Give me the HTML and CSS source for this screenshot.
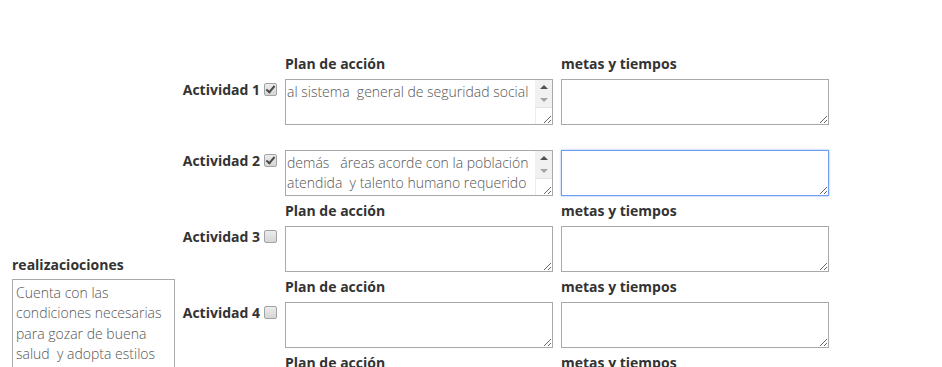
FILE: index.html
```html
<!DOCTYPE html>
<html lang="es">
<head>
  <meta charset="UTF-8">
  <title>Plan de acción</title>
  <link rel="stylesheet" href="styles.css">
</head>
<body>
  <div class="page">
    <div class="left-col">
      <label class="left-title" for="realizaciones">realizaciociones</label>
      <textarea id="realizaciones" class="left-text">Cuenta con las condiciones necesarias para gozar de buena salud  y adopta estilos</textarea>
    </div>

    <div class="activities">
      <div class="heads">
        <span class="spacer"></span>
        <span class="head">Plan de acción</span>
        <span class="head">metas y tiempos</span>
      </div>
      <div class="fields">
        <div class="act-label">Actividad 1 <input type="checkbox" checked disabled></div>
        <div class="scroll-wrap">
          <textarea class="box scrolled">al sistema  general de seguridad social

</textarea>
          <span class="fake-bar"><span class="arrow-up"></span><span class="arrow-down"></span></span>
        </div>
        <textarea class="box"></textarea>
      </div>

      <div class="heads heads-empty"></div>
      <div class="fields">
        <div class="act-label">Actividad 2 <input type="checkbox" checked disabled></div>
        <div class="scroll-wrap">
          <textarea class="box scrolled">demás   áreas acorde con la población atendida  y talento humano requerido
</textarea>
          <span class="fake-bar"><span class="arrow-up"></span><span class="arrow-down"></span></span>
        </div>
        <textarea class="box" autofocus></textarea>
      </div>

      <div class="heads">
        <span class="spacer"></span>
        <span class="head">Plan de acción</span>
        <span class="head">metas y tiempos</span>
      </div>
      <div class="fields">
        <div class="act-label">Actividad 3 <input type="checkbox" disabled></div>
        <textarea class="box"></textarea>
        <textarea class="box"></textarea>
      </div>

      <div class="heads">
        <span class="spacer"></span>
        <span class="head">Plan de acción</span>
        <span class="head">metas y tiempos</span>
      </div>
      <div class="fields">
        <div class="act-label">Actividad 4 <input type="checkbox" disabled></div>
        <textarea class="box"></textarea>
        <textarea class="box"></textarea>
      </div>

      <div class="heads">
        <span class="spacer"></span>
        <span class="head">Plan de acción</span>
        <span class="head">metas y tiempos</span>
      </div>
      <div class="fields">
        <div class="act-label">Actividad 5 <input type="checkbox" disabled></div>
        <textarea class="box"></textarea>
        <textarea class="box"></textarea>
      </div>
    </div>
  </div>
</body>
</html>
```

FILE: styles.css
```css
body {
  margin: 0;
  font-family: "Open Sans", "Liberation Sans", sans-serif;
  font-size: 14px;
  color: #333;
  background-color: #fff;
}

.page {
  display: flex;
  align-items: flex-start;
  padding: 54px 0 0 12px;
}

.left-col {
  width: 163px;
  padding-top: 201px;
  display: flex;
  flex-direction: column;
}

.left-title {
  font-weight: bold;
  line-height: 20px;
  margin-bottom: 4px;
}

.left-text {
  width: 163px;
  height: 130px;
  box-sizing: border-box;
  margin: 0;
  padding: 3px 2px 3px 3px;
  border: 1px solid #a9a9a9;
  font-family: inherit;
  font-size: 14px;
  font-weight: 300;
  line-height: 20.4px;
  color: #555;
  resize: none;
  overflow: hidden;
}

.heads {
  display: flex;
  gap: 8px;
  height: 20px;
  line-height: 20px;
  margin-bottom: 5px;
}

.heads-empty {
  height: 15px;
}

.spacer {
  width: 110px;
  margin-right: -8px;
}

.head {
  width: 268px;
  font-weight: bold;
}

.fields {
  display: flex;
  gap: 8px;
  align-items: flex-start;
  margin-bottom: 5px;
}

.act-label {
  width: 110px;
  margin-right: -8px;
  padding-right: 8px;
  box-sizing: border-box;
  display: flex;
  align-items: center;
  justify-content: flex-end;
  height: 20px;
  font-weight: bold;
  white-space: nowrap;
}

.act-label input {
  appearance: none;
  -webkit-appearance: none;
  position: relative;
  width: 13px;
  height: 13px;
  margin: 0 0 0 4px;
  border: 1px solid #a3a3a3;
  border-radius: 2px;
  background: linear-gradient(#ececec, #d6d6d6);
  box-sizing: border-box;
}

.act-label input:checked::after {
  content: "";
  position: absolute;
  left: 3px;
  top: 0;
  width: 3px;
  height: 7px;
  border: solid #4a4a4a;
  border-width: 0 2px 2px 0;
  transform: rotate(40deg);
}

.box {
  width: 268px;
  height: 46px;
  box-sizing: border-box;
  margin: 0;
  padding: 2px 2px 2px 1px;
  border: 1px solid #a9a9a9;
  font-family: inherit;
  font-size: 14px;
  font-weight: 300;
  line-height: 20px;
  color: #555;
  vertical-align: top;
}

.box:focus {
  outline: none;
  border-color: #6d9cf2;
  box-shadow: 0 0 2px #8ab4f8;
}

.scroll-wrap {
  position: relative;
  height: 46px;
}

.scrolled {
  padding-right: 19px;
  overflow: hidden;
}

/* stand-in for the native scrollbar, which the headless browser hides */
.fake-bar {
  position: absolute;
  top: 1px;
  right: 1px;
  width: 17px;
  height: 27px;
  background-color: #f1f1f1;
  border-bottom: 1px solid #e3e3e3;
  display: flex;
  flex-direction: column;
  align-items: center;
}

.fake-bar::after {
  content: "";
  position: absolute;
  top: 28px;
  left: 0;
  width: 1px;
  height: 16px;
  background-color: #ececec;
}

.arrow-up {
  width: 0;
  margin-top: 5px;
  border-left: 4px solid transparent;
  border-right: 4px solid transparent;
  border-bottom: 4px solid #505050;
}

.arrow-down {
  width: 0;
  margin-top: 9px;
  border-left: 4px solid transparent;
  border-right: 4px solid transparent;
  border-top: 4px solid #a3a3a3;
}
```
